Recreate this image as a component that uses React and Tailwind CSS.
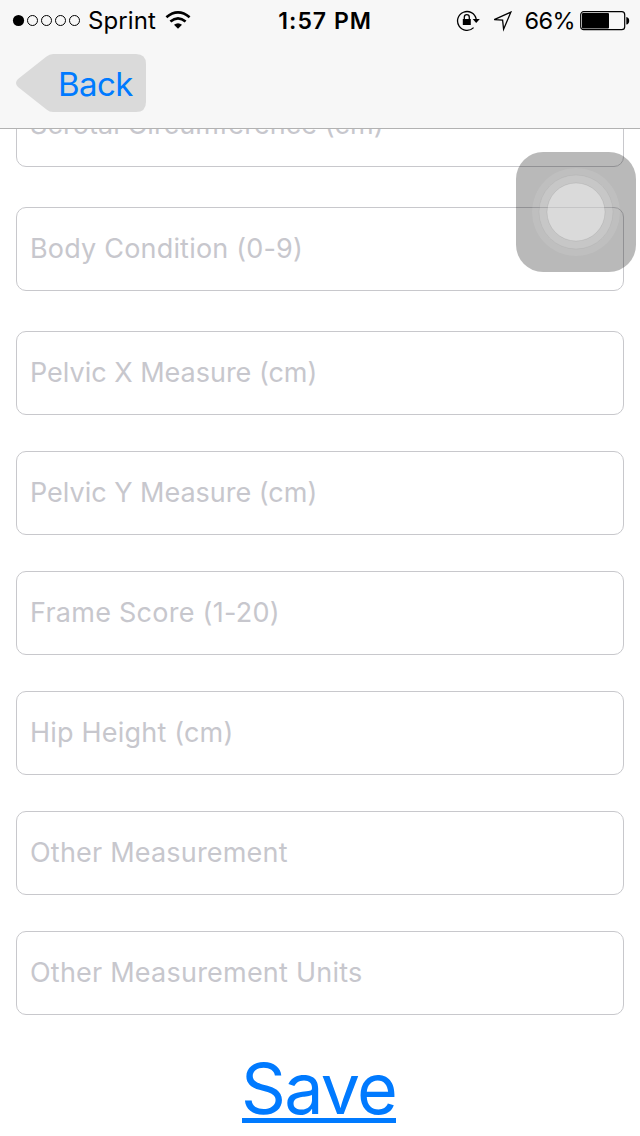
const fields = [
  { label: 'Scrotal Circumference (cm)', gap: 'mb-10', tracking: 'tracking-[0.08px]' },
  { label: 'Body Condition (0-9)', gap: 'mb-10', tracking: 'tracking-[0.19px]' },
  { label: 'Pelvic X Measure (cm)', gap: 'mb-9', tracking: 'tracking-[-0.01px]' },
  { label: 'Pelvic Y Measure (cm)', gap: 'mb-9', tracking: 'tracking-[-0.01px]' },
  { label: 'Frame Score (1-20)', gap: 'mb-9', tracking: 'tracking-[0.26px]' },
  { label: 'Hip Height (cm)', gap: 'mb-9', tracking: 'tracking-[0.2px]' },
  { label: 'Other Measurement', gap: 'mb-9', tracking: 'tracking-[0.2px]' },
  { label: 'Other Measurement Units', gap: 'mb-9', tracking: 'tracking-[0.22px]' },
];

function StatusBar() {
  return (
    <div className="grid h-[41px] grid-cols-3 items-center whitespace-nowrap pt-px text-[24px] leading-10 text-black">
      <div className="flex items-center pl-3">
        <svg width="70" height="14" viewBox="0 0 70 14" className="shrink-0">
          <circle cx="6.5" cy="6.5" r="5.6" fill="#000" />
          {[20.5, 34.5, 48.5, 62.5].map((cx) => (
            <circle key={cx} cx={cx} cy="6.5" r="5" fill="none" stroke="#000" strokeWidth="1" />
          ))}
        </svg>
        <span className="ml-1.5 tracking-[0.1px]">Sprint</span>
        <svg width="26" height="20" viewBox="0 0 26 20" className="ml-[9.5px] shrink-0">
          <g fill="none" stroke="#000" strokeWidth="2.6">
            <path d="M1.4 6.2 Q13 -3.4 24.6 6.2" />
            <path d="M5.4 10.6 Q13 4 20.6 10.6" />
          </g>
          <path d="M9 13.7 Q13 10.7 17 13.7 L13 17.8 Z" fill="#000" />
        </svg>
      </div>
      <div className="pl-[65px] text-[23px] font-semibold tracking-[1px]">1:57 PM</div>
      <div className="flex items-center justify-end pr-[10px]">
        <svg width="25" height="22" viewBox="0 0 25 22" className="shrink-0">
          <path d="M17.6 17.6 A9.4 9.4 0 1 1 20.2 9.2" fill="none" stroke="#000" strokeWidth="1.3" />
          <path d="M16.7 9 H23.8 L20.2 13 Z" fill="#000" />
          <path d="M6.8 9 H14.8 V15 H6.8 Z" fill="#000" />
          <path d="M8.3 9.5 V7.2 Q8.3 4.7 10.8 4.7 Q13.3 4.7 13.3 7.2 V9.5" fill="none" stroke="#000" strokeWidth="1.3" />
        </svg>
        <svg width="21" height="21" viewBox="0 0 21 21" className="ml-[11px] shrink-0">
          <path d="M18.8 1.2 L2.2 8.6 L10.6 9.2 L11.6 18.2 Z" fill="none" stroke="#000" strokeWidth="1.3" />
        </svg>
        <span className="ml-3 text-[23.5px] tracking-[-0.6px]">66%</span>
        <svg width="50" height="20" viewBox="0 0 50 20" className="ml-[5px] shrink-0">
          <rect x="0.7" y="0.7" width="44" height="18" rx="3" fill="none" stroke="#000" strokeWidth="1.2" />
          <rect x="2" y="2" width="27" height="15.4" rx="1" fill="#000" />
          <path d="M46.3 6 Q49.2 6.5 49.2 9.7 Q49.2 13 46.3 13.5 Z" fill="#000" />
        </svg>
      </div>
    </div>
  );
}

function BackButton() {
  return (
    <button className="relative ml-4 mt-[13px] block h-[58px] w-[130px]">
      <svg width="130" height="58" viewBox="0 0 130 58" className="absolute inset-0">
        <path
          d="M37 0 H120 Q130 0 130 10 V48 Q130 58 120 58 H37 Q33.5 58 30.5 55.5 L2 33 Q-2 29 2 25 L30.5 2.5 Q33.5 0 37 0 Z"
          fill="#dadada"
        />
      </svg>
      <span className="relative block pl-[42px] pt-px text-left text-[33px] leading-[58px] tracking-[-0.55px] text-[#007aff]">
        Back
      </span>
    </button>
  );
}

function AssistiveTouch() {
  return (
    <svg width="120" height="120" viewBox="0 0 120 120" className="absolute left-[516px] top-[152px]">
      <rect width="120" height="120" rx="27" fill="#000" fillOpacity="0.275" />
      <circle cx="60" cy="60" r="44" fill="#fff" fillOpacity="0.09" />
      <circle cx="60" cy="60" r="37" fill="#fff" fillOpacity="0.13" stroke="#000" strokeOpacity="0.04" />
      <circle cx="60" cy="60" r="29" fill="#fff" fillOpacity="0.34" stroke="#000" strokeOpacity="0.07" />
    </svg>
  );
}

export default function App() {
  return (
    <div className="relative flex h-[1136px] w-[640px] flex-col overflow-hidden bg-white font-['Inter',sans-serif]">
      <header className="h-[129px] shrink-0 border-b border-[#b2b2b2] bg-[#f7f7f7]">
        <StatusBar />
        <BackButton />
      </header>
      <main className="min-h-0 flex-1 overflow-hidden px-4">
        <div className="-mt-[46px] flex flex-col">
          {fields.map(({ label, gap, tracking }) => (
            <div
              key={label}
              className={`${gap} flex h-[84px] shrink-0 items-center whitespace-nowrap rounded-[10px] border border-[#c8c8cc] pl-[13px] text-[27px] leading-[34px] text-[#c7c7cd] ${tracking}`}
            >
              {label}
            </div>
          ))}
          <div className="flex justify-center">
            <button className="mr-0.5 h-[72px] w-[154px] whitespace-nowrap border-b-[5px] border-[#007aff] text-left text-[70px] leading-[76px] tracking-[-1.7px] text-[#007aff]">
              <span className="-ml-px">Save</span>
            </button>
          </div>
        </div>
      </main>
      <AssistiveTouch />
    </div>
  );
}
